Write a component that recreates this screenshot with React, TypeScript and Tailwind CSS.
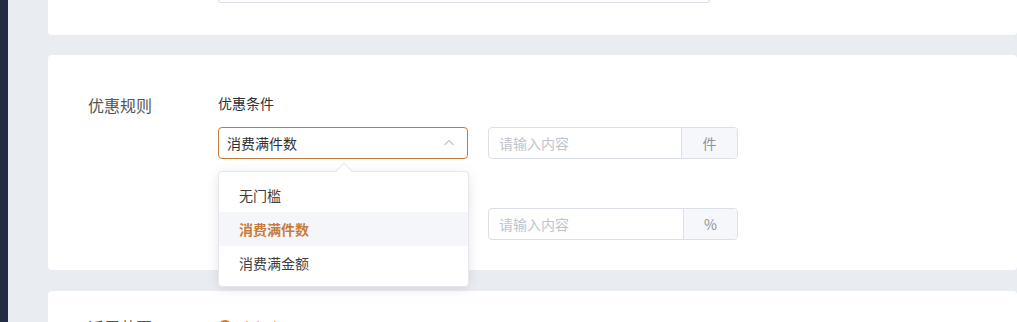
import { useState } from 'react'

const font = { fontFamily: '"Noto Sans CJK SC", "Noto Sans", sans-serif' }

function ChevronUp() {
  return (
    <svg width="12" height="12" viewBox="0 0 12 12" className="text-[#c0c4cc]">
      <path d="M1.5 8L6 3.5 10.5 8" fill="none" stroke="currentColor" strokeWidth="1.1" />
    </svg>
  )
}

function InputGroup({ unit, unitWidth }: { unit: string; unitWidth: string }) {
  return (
    <div className="flex w-[250px] h-[32px] border border-[#dcdfe6] rounded-[4px] overflow-hidden">
      <div className="flex-1 flex items-center pl-[10px] text-[14px] text-[#c0c4cc]">请输入内容</div>
      <div className={`${unitWidth} flex items-center justify-center bg-[#f5f7fa] border-l border-[#dcdfe6] text-[14px] text-[#909399]`}>
        {unit}
      </div>
    </div>
  )
}

export default function App() {
  const [selected] = useState('消费满件数')
  const options = ['无门槛', '消费满件数', '消费满金额']

  return (
    <div className="flex w-[1017px] h-[322px] overflow-hidden" style={font}>
      <div className="w-[8px] shrink-0 bg-[#222c44]" />
      <div className="flex-1 bg-[#e9ecf0] pl-[40px] flex flex-col">
        {/* previous card, bottom edge only */}
        <div className="h-[35px] bg-white rounded-b-[4px] shrink-0">
          <div className="ml-[170px] w-[492px] h-[3px] border-x border-b border-[#dcdfe6] rounded-b-[4px]" />
        </div>

        {/* 优惠规则 */}
        <div className="mt-[20px] h-[215px] shrink-0 bg-white rounded-[4px] flex pt-[38px]">
          <div className="w-[170px] pl-[40px] pt-[1px] text-[16px] leading-[22px] text-[#555]">优惠规则</div>
          <div className="flex flex-col">
            <div className="text-[14px] leading-[20px] text-[#303133]">优惠条件</div>
            <div className="flex gap-[20px] mt-[14px]">
              <div className="relative">
                <div className="w-[250px] h-[32px] border border-[#c47a3a] rounded-[4px] flex items-center justify-between pl-[8px] pr-[12px]">
                  <span className="text-[14px] text-[#303133]">{selected}</span>
                  <ChevronUp />
                </div>
                {/* dropdown */}
                <div className="absolute left-0 top-[44px] z-10 w-[251px] bg-white border border-[#e4e7ed] rounded-[4px] shadow-[0_2px_12px_rgba(0,0,0,0.1)] py-[6px]">
                  <div className="absolute left-[119px] -top-[7px] w-[12px] h-[12px] bg-white border-l border-t border-[#e4e7ed] rotate-45" />
                  {options.map(o => (
                    <div
                      key={o}
                      className={
                        o === selected
                          ? 'relative h-[34px] flex items-center pl-[20px] bg-[#f5f6fa] text-[14px] font-bold text-[#c77c3c]'
                          : 'relative h-[34px] flex items-center pl-[20px] text-[14px] text-[#404040]'
                      }
                    >
                      {o}
                    </div>
                  ))}
                </div>
              </div>
              <InputGroup unit="件" unitWidth="w-[56px]" />
            </div>

            {/* second row sits under the open dropdown */}
            <div className="h-[20px] mt-[14px]" />
            <div className="flex gap-[20px] mt-[15px]">
              <div className="w-[250px] h-[32px]" />
              <InputGroup unit="%" unitWidth="w-[54px]" />
            </div>
          </div>
        </div>

        {/* 适用范围 */}
        <div className="mt-[21px] h-[80px] shrink-0 bg-white rounded-[4px] flex pt-[25px]">
          <div className="w-[170px] pl-[40px] text-[16px] leading-[22px] text-[#555]">适用范围</div>
          <div className="flex items-center gap-[8px] h-[22px]">
            <span className="w-[14px] h-[14px] rounded-full border-[4px] border-[#c77c3c]" />
            <span className="text-[14px] text-[#c77c3c]">全部商品可用</span>
          </div>
        </div>
      </div>
    </div>
  )
}
